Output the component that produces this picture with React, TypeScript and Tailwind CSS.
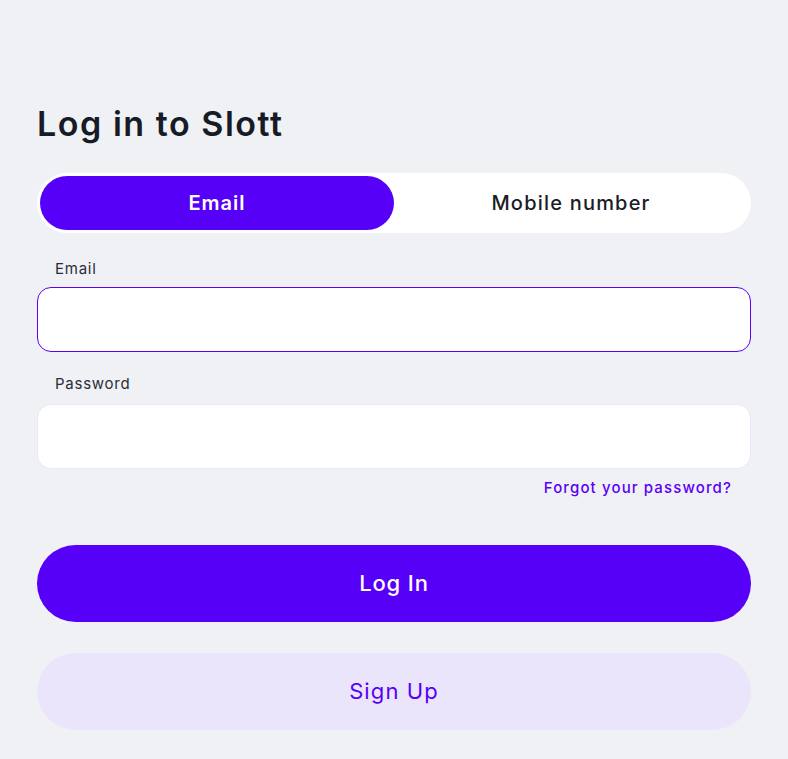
import React, { useState } from 'react';

const font = { fontFamily: 'Inter, "Noto Sans", sans-serif' };

const App: React.FC = () => {
  const [tab, setTab] = useState<'email' | 'mobile'>('email');

  return (
    <div className="min-h-screen w-full bg-[#f0f1f5] text-[#1a1d26]" style={font}>
      <div className="px-[37px] pt-[102px] pb-[28px]">
        <h1 className="text-[34px] leading-[44px] font-semibold tracking-[0.045em] text-[#161b26]">Log in to Slott</h1>

        {/* Tabs */}
        <div className="mt-[27px] flex h-[60px] items-stretch rounded-full bg-white p-[3px]">
          <button
            onClick={() => setTab('email')}
            className={`flex-1 rounded-full text-[20px] font-semibold tracking-[0.05em] ${tab === 'email' ? 'bg-[#5700f7] text-white' : 'text-[#1a1d26]'}`}
          >
            Email
          </button>
          <button
            onClick={() => setTab('mobile')}
            className={`flex-1 rounded-full text-[20px] font-medium tracking-[0.06em] ${tab === 'mobile' ? 'bg-[#5700f7] text-white' : 'text-[#1a1d26]'}`}
          >
            Mobile number
          </button>
        </div>

        {/* Fields */}
        <form className="mt-[25px] flex flex-col">
          <label className="pl-[18px] text-[15px] leading-[22px] tracking-[0.05em] text-[#2a2d37]">Email</label>
          <input
            type="text"
            className="mt-[7px] h-[65px] rounded-[14px] border-[1.5px] border-[#5a00f5] bg-white px-4 outline-none"
          />

          <label className="mt-[21px] pl-[18px] text-[15px] leading-[22px] tracking-[0.05em] text-[#2a2d37]">Password</label>
          <input
            type="password"
            className="mt-[9px] h-[65px] rounded-[14px] border border-[#ebe6fb] bg-white px-4 outline-none"
          />

          <div className="mt-[8px] flex justify-end pr-[19px]">
            <a className="text-[15px] leading-[22px] font-medium tracking-[0.075em] text-[#5a00f5]">Forgot your password?</a>
          </div>

          <button
            type="button"
            className="mt-[46px] h-[77px] rounded-full bg-[#5700f7] text-[22px] font-medium tracking-[0.04em] text-white"
          >
            Log In
          </button>
          <button
            type="button"
            className="mt-[31px] h-[77px] rounded-full bg-[#ebe5fb] text-[22px] tracking-[0.05em] text-[#5700f7]"
          >
            Sign Up
          </button>
        </form>
      </div>
    </div>
  );
};

export default App;
